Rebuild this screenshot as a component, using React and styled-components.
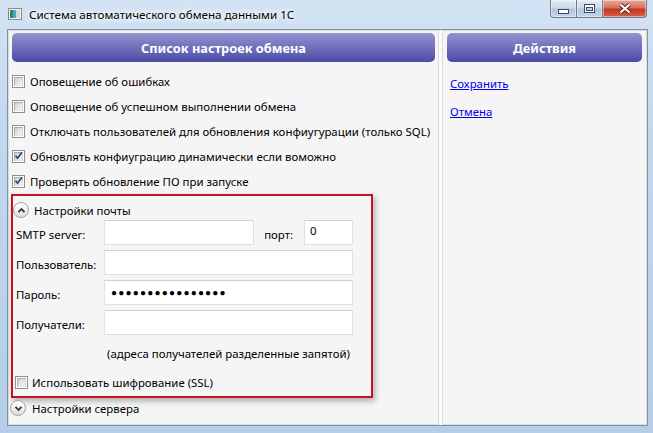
import React from 'react';
import styled, { createGlobalStyle } from 'styled-components';

const GlobalStyle = createGlobalStyle`
  html, body {
    margin: 0;
    padding: 0;
  }

  body {
    font-family: 'Noto Sans', 'Open Sans', sans-serif;
    font-size: 11.4px;
    color: #000;
  }
`;

const Window = styled.div`
  width: 653px;
  height: 433px;
  box-sizing: border-box;
  padding: 0 5px 7px 7px;
  display: flex;
  flex-direction: column;
  background: linear-gradient(180deg, #d3e3f4 0%, #c2d8ef 30%, #b4cee9 100%);
`;

const TitleBar = styled.div`
  height: 29px;
  display: flex;
  align-items: flex-start;
`;

const AppIcon = styled.svg`
  margin: 8px 0 0 1px;
  flex: none;
`;

const Title = styled.div`
  margin: 7px 0 0 7px;
  font-size: 11.6px;
  line-height: 16px;
  white-space: nowrap;
  text-shadow: 0 0 8px #fff, 0 0 6px #fff, 0 0 4px #fff;
`;

const CaptionButtons = styled.div`
  margin-left: auto;
  margin-right: 1px;
  display: flex;
`;

const CaptionButton = styled.div`
  width: ${({ wide }) => (wide ? 45 : 27)}px;
  height: 18px;
  box-sizing: border-box;
  display: flex;
  align-items: center;
  justify-content: center;
  border: 1px solid #6b7d96;
  border-top: none;
  margin-left: -1px;
  background: ${({ danger }) =>
    danger
      ? 'linear-gradient(180deg, #e9a99c 0%, #d9705c 45%, #c4371f 55%, #d7604a 100%)'
      : 'linear-gradient(180deg, #e4ecf6 0%, #ccdaea 45%, #b3c6de 55%, #c3d5ea 100%)'};
  border-radius: ${({ first, last }) =>
    first ? '0 0 0 4px' : last ? '0 0 4px 0' : '0'};
  box-shadow: inset 0 0 0 1px rgba(255, 255, 255, 0.45);
`;

const Client = styled.div`
  flex: 1;
  display: flex;
  border: 1px solid #7f91a8;
  background: #f5f5f5;
  min-height: 0;
`;

const Panel = styled.div`
  width: ${({ width }) => width}px;
  box-sizing: border-box;
  border: 1px solid #dbdbdb;
  padding: 2px ${({ padX }) => padX}px;
  display: flex;
  flex-direction: column;
  flex: none;
`;

const Splitter = styled.div`
  width: 3px;
  flex: none;
  background: #fbfbfb;
`;

const PanelHeader = styled.div`
  height: 29px;
  flex: none;
  border-radius: 5px;
  background: linear-gradient(180deg, #9393cf 0%, #7474bd 45%, #4a4aa8 100%);
  color: #fff;
  font-weight: bold;
  font-size: 12.8px;
  display: flex;
  align-items: center;
  justify-content: center;
  white-space: nowrap;
`;

const OptionList = styled.div`
  margin-top: 7px;
  display: flex;
  flex-direction: column;
`;

const CheckRow = styled.label`
  height: 25px;
  display: flex;
  align-items: center;
  gap: ${({ gap }) => gap || 5}px;
  padding-left: ${({ indent }) => indent || 0}px;
  white-space: nowrap;
`;

const Box = styled.span`
  width: 13px;
  height: 13px;
  box-sizing: border-box;
  flex: none;
  border: 1px solid #8e8f8f;
  background: #fff;
  padding: 1px;
  display: flex;
`;

const BoxInner = styled.span`
  flex: 1;
  position: relative;
  background: linear-gradient(135deg, #cfcfcf 0%, #e8e8e8 60%, #f6f6f6 100%);
  border: 1px solid #b5b5b5;
  border-color: #a9a9a9 #d3d3d3 #e2e2e2 #aeaeae;
`;

const Tick = styled.svg`
  position: absolute;
  left: -3px;
  top: -4px;
`;

const MailBox = styled.div`
  margin: 0 0 0 -1px;
  width: 362px;
  height: 204px;
  box-sizing: border-box;
  border: 2px solid #c3161c;
  box-shadow: 2px 3px 6px rgba(0, 0, 0, 0.3);
  padding-top: 4px;
  display: flex;
  flex-direction: column;
`;

const ExpanderRow = styled.div`
  height: 20px;
  display: flex;
  align-items: center;
  gap: ${({ gap }) => gap}px;
  margin-left: ${({ shift }) => shift}px;
  flex: none;
  white-space: nowrap;
`;

const Circle = styled.span`
  width: 16px;
  height: 16px;
  box-sizing: border-box;
  border-radius: 50%;
  border: 1px solid #a3a3a3;
  background: linear-gradient(180deg, #ffffff 0%, #f2f2f2 50%, #dadada 100%);
  display: flex;
  align-items: center;
  justify-content: center;
  flex: none;
`;

const Form = styled.div`
  display: grid;
  grid-template-columns: 88px 249px;
  row-gap: 5px;
  padding-left: 3px;
`;

const FieldLabel = styled.div`
  height: 25px;
  display: flex;
  align-items: center;
  padding-top: 4px;
  box-sizing: border-box;
  white-space: nowrap;
`;

const FieldLine = styled.div`
  display: flex;
  align-items: center;
`;

const Field = styled.div`
  width: ${({ width }) => (width ? `${width}px` : '100%')};
  height: 25px;
  box-sizing: border-box;
  background: #fff;
  border: 1px solid #e0e1e6;
  border-top-color: #cfd0d6;
  padding: 2px 5px;
  line-height: 16px;
  flex: none;
`;

const PortLabel = styled.span`
  margin-left: auto;
  margin-right: 11px;
  padding-top: 4px;
`;

const Dots = styled.span`
  font-size: 10px;
  letter-spacing: 1.2px;
  line-height: 18px;
  padding-left: 1px;
`;

const Hint = styled.div`
  margin: 8px 0 0 91px;
  width: 249px;
  height: 20px;
  display: flex;
  align-items: center;
  justify-content: center;
  white-space: nowrap;
`;

const SslRow = styled(CheckRow)`
  margin-top: 9px;
  height: 20px;
`;

const LinkList = styled.div`
  padding: 13px 0 0 3px;
  display: flex;
  flex-direction: column;
  gap: 11px;
`;

const Link = styled.a`
  color: #0000ee;
  text-decoration: underline;
  line-height: 17px;
  cursor: pointer;
`;

const Check = ({ checked }) => (
  <Box>
    <BoxInner>
      {checked && (
        <Tick width="13" height="13" viewBox="0 0 13 13">
          <path d="M3.5 6.8 L5.6 9.2 L9.8 3.6" fill="none" stroke="#2a4483" strokeWidth="1.7" />
        </Tick>
      )}
    </BoxInner>
  </Box>
);

const Chevron = ({ up }) => (
  <svg width="9" height="7" viewBox="0 0 9 7">
    <path
      d={up ? 'M1.5 5.2 L4.5 2 L7.5 5.2' : 'M1.5 1.8 L4.5 5 L7.5 1.8'}
      fill="none"
      stroke="#333"
      strokeWidth="1.8"
    />
  </svg>
);

const options = [
  { text: 'Оповещение об ошибках', checked: false },
  { text: 'Оповещение об успешном выполнении обмена', checked: false },
  { text: 'Отключать пользователей для обновления конфиугурации (только SQL)', checked: false },
  { text: 'Обновлять конфиуграцию динамически если воможно', checked: true },
  { text: 'Проверять обновление ПО при запуске', checked: true },
];

export default function App() {
  return (
    <>
      <GlobalStyle />
      <Window>
        <TitleBar>
          <AppIcon width="14" height="12" viewBox="0 0 14 12">
            <rect x="0.5" y="0.5" width="13" height="11" fill="#f4f4f4" stroke="#8a8a8a" />
            <rect x="2" y="2" width="3" height="8" fill="#2f8a4a" />
            <rect x="5" y="2" width="3" height="8" fill="#4aa3d6" />
            <rect x="8" y="2" width="4" height="8" fill="#d8d8d8" />
          </AppIcon>
          <Title>Система автоматического обмена данными 1С</Title>
          <CaptionButtons>
            <CaptionButton first>
              <svg width="11" height="5" viewBox="0 0 11 5" style={{ marginTop: 5 }}>
                <rect x="0.5" y="0.5" width="10" height="4" fill="#fff" stroke="#3c4a5e" />
              </svg>
            </CaptionButton>
            <CaptionButton>
              <svg width="11" height="9" viewBox="0 0 11 9">
                <rect x="0.5" y="0.5" width="10" height="8" fill="#fff" stroke="#3c4a5e" />
                <rect x="2.5" y="3.5" width="6" height="3" fill="#c6d3e3" stroke="#3c4a5e" />
              </svg>
            </CaptionButton>
            <CaptionButton wide danger last>
              <svg width="14" height="11" viewBox="0 0 14 11">
                <path d="M2.5 1.5 L11.5 9.5 M11.5 1.5 L2.5 9.5" stroke="#5a1a12" strokeWidth="4" />
                <path d="M2.5 1.5 L11.5 9.5 M11.5 1.5 L2.5 9.5" stroke="#fff" strokeWidth="2.2" />
              </svg>
            </CaptionButton>
          </CaptionButtons>
        </TitleBar>
        <Client>
          <Panel width={431} padX={3}>
            <PanelHeader>Список настроек обмена</PanelHeader>
            <OptionList>
              {options.map((o) => (
                <CheckRow key={o.text}>
                  <Check checked={o.checked} />
                  <span>{o.text}</span>
                </CheckRow>
              ))}
            </OptionList>
            <MailBox>
              <ExpanderRow gap={5} shift={0}>
                <Circle>
                  <Chevron up />
                </Circle>
                <span>Настройки почты</span>
              </ExpanderRow>
              <Form>
                <FieldLabel>SMTP server:</FieldLabel>
                <FieldLine>
                  <Field width={150} />
                  <PortLabel>порт:</PortLabel>
                  <Field width={49}>0</Field>
                </FieldLine>
                <FieldLabel>Пользователь:</FieldLabel>
                <Field />
                <FieldLabel>Пароль:</FieldLabel>
                <Field>
                  <Dots>{'●'.repeat(16)}</Dots>
                </Field>
                <FieldLabel>Получатели:</FieldLabel>
                <Field />
              </Form>
              <Hint>(адреса получателей разделенные запятой)</Hint>
              <SslRow indent={2} gap={4}>
                <Check />
                <span>Использовать шифрование (SSL)</span>
              </SslRow>
            </MailBox>
            <ExpanderRow gap={6} shift={-2}>
              <Circle>
                <Chevron />
              </Circle>
              <span>Настройки сервера</span>
            </ExpanderRow>
          </Panel>
          <Splitter />
          <Panel width={205} padX={4}>
            <PanelHeader>Действия</PanelHeader>
            <LinkList>
              <Link>Сохранить</Link>
              <Link>Отмена</Link>
            </LinkList>
          </Panel>
        </Client>
      </Window>
    </>
  );
}
